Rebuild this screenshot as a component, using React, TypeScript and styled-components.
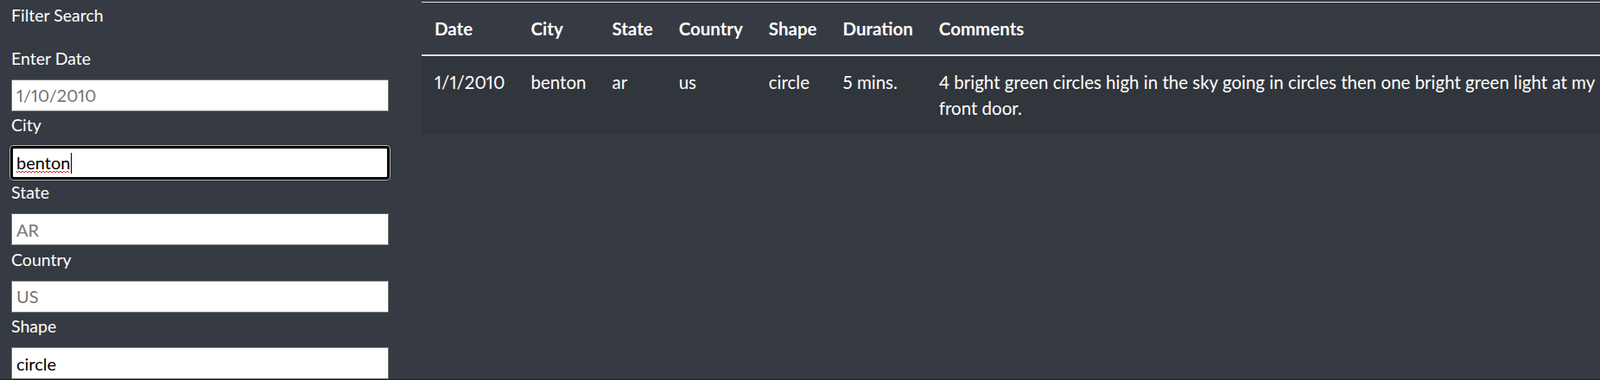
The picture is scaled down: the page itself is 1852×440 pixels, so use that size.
import React from "react";
import styled, { createGlobalStyle } from "styled-components";

const Global = createGlobalStyle`
  html, body { margin: 0; padding: 0; background: #363a42; }
  body { font-family: Lato, "Liberation Sans", sans-serif; color: #fff; }
  * { box-sizing: border-box; }
`;

const Page = styled.div`
  display: grid;
  grid-template-columns: 488px 1fr;
  height: 440px;
  overflow: hidden;
  background: #363a42;
  border-bottom: 1px solid #1c1e22;
`;

const Sidebar = styled.aside`
  padding: 3px 0 0 13px;
  width: 450px;
`;

const Title = styled.div`
  font-size: 19.5px;
  line-height: 30px;
  margin-bottom: 18.4px;
`;

const Label = styled.label`
  display: block;
  font-size: 19.5px;
  line-height: 30px;
  padding-top: 1.5px;
  margin-bottom: 9.1px;
`;

const FieldWrap = styled.div`
  position: relative;
`;

const Input = styled.input<{ $focused?: boolean }>`
  display: block;
  width: 437px;
  height: 37px;
  margin: 0;
  padding: 0 0 0 ${(p) => (p.$focused ? "4px" : "5px")};
  border: ${(p) => (p.$focused ? "2px solid #000" : "1px solid #767676")};
  border-radius: ${(p) => (p.$focused ? "3px" : "0")};
  box-shadow: ${(p) => (p.$focused ? "0 0 0 1px #000, 0 0 0 2px rgba(255,255,255,0.6)" : "none")};
  outline: none;
  background: #fff;
  color: #000;
  font-family: Lato, "Liberation Sans", sans-serif;
  font-size: 20px;
  font-variant-numeric: proportional-nums;
  &::placeholder { color: #757575; opacity: 1; }
`;

const Caret = styled.span<{ $left: number }>`
  position: absolute;
  top: 7px;
  left: ${(p) => p.$left}px;
  width: 1px;
  height: 24px;
  background: #000;
`;

const Squiggle = styled.svg`
  position: absolute;
  left: 6px;
  top: 27px;
  width: 62px;
  height: 4px;
  overflow: visible;
`;

const Main = styled.main`
  padding-top: 2px;
  min-width: 0;
`;

const Table = styled.table`
  width: 100%;
  border-collapse: collapse;
  font-size: 20.5px;
  line-height: 30px;
  color: #fff;
  font-variant-numeric: proportional-nums;
`;

const Th = styled.th<{ $last?: boolean }>`
  text-align: left;
  font-weight: 700;
  padding: 15px ${(p) => (p.$last ? "0" : "15px")} 15px 15px;
  border-top: 1px solid #dee2e6;
  border-bottom: 2px solid #dee2e6;
  vertical-align: bottom;
  white-space: nowrap;
`;

const Row = styled.tr`
  background: #31353c;
`;

const Td = styled.td<{ $wrap?: boolean }>`
  padding: 15px ${(p) => (p.$wrap ? "0" : "15px")} 15px 15px;
  vertical-align: top;
  white-space: ${(p) => (p.$wrap ? "normal" : "nowrap")};
`;

const fields = [
  { label: "City", placeholder: "", value: "benton", focused: true },
  { label: "State", placeholder: "AR", value: "" },
  { label: "Country", placeholder: "US", value: "" },
  { label: "Shape", placeholder: "", value: "circle" },
];

const headers = ["Date", "City", "State", "Country", "Shape", "Duration", "Comments"];

function wave(width: number) {
  let d = "M0 1";
  for (let x = 0; x < width; x += 2) {
    d += ` L${x + 1} ${(x / 2) % 2 === 0 ? 3 : 1}`;
  }
  return d;
}

export default function App() {
  return (
    <>
      <Global />
      <Page>
        <Sidebar>
          <Title>Filter Search</Title>
          <Label>Enter Date</Label>
          <Input placeholder="1/10/2010" readOnly />
          {fields.map((f) => (
            <React.Fragment key={f.label}>
              <Label>{f.label}</Label>
              <FieldWrap>
                <Input
                  placeholder={f.placeholder}
                  defaultValue={f.value}
                  $focused={f.focused}
                  readOnly
                  spellCheck={false}
                />
                {f.focused && (
                  <>
                    <Squiggle viewBox="0 0 62 4">
                      <path d={wave(62)} fill="none" stroke="#e0201c" strokeWidth="1" />
                    </Squiggle>
                    <Caret $left={69} />
                  </>
                )}
              </FieldWrap>
            </React.Fragment>
          ))}
        </Sidebar>
        <Main>
          <Table>
            <thead>
              <tr>
                {headers.map((h, i) => (
                  <Th key={h} $last={i === headers.length - 1}>{h}</Th>
                ))}
              </tr>
            </thead>
            <tbody>
              <Row>
                <Td>1/1/2010</Td>
                <Td>benton</Td>
                <Td>ar</Td>
                <Td>us</Td>
                <Td>circle</Td>
                <Td>5 mins.</Td>
                <Td $wrap>
                  4 bright green circles high in the sky going in circles then one bright green light at my front door.
                </Td>
              </Row>
            </tbody>
          </Table>
        </Main>
      </Page>
    </>
  );
}
